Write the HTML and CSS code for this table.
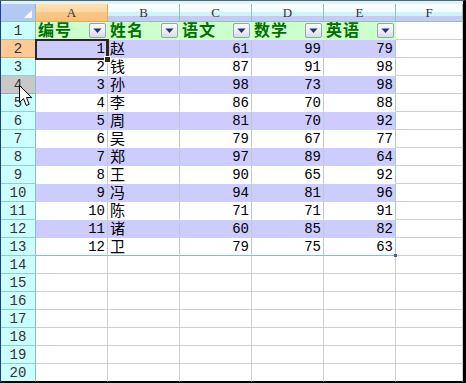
FILE: index.html
```html
<!DOCTYPE html>
<html lang="zh">
<head>
<meta charset="utf-8">
<title>Sheet</title>
<link rel="stylesheet" href="styles.css">
</head>
<body>
<div class="sheet">
  <div class="strip"></div>
  <div class="grid">
    <div class="corner"><span class="tri"></span></div>
    <div class="ch ch-sel">A</div>
    <div class="ch">B</div>
    <div class="ch">C</div>
    <div class="ch">D</div>
    <div class="ch">E</div>
    <div class="ch">F</div>

    <div class="rh">1</div>
    <div class="th"><span class="tt">编号</span><span class="dd"><svg width="9" height="6" viewBox="0 0 9 6"><path d="M0.5 0.5h8l-4 4.5z" fill="#1d2f78"/></svg></span></div>
    <div class="th"><span class="tt">姓名</span><span class="dd"><svg width="9" height="6" viewBox="0 0 9 6"><path d="M0.5 0.5h8l-4 4.5z" fill="#1d2f78"/></svg></span></div>
    <div class="th"><span class="tt">语文</span><span class="dd"><svg width="9" height="6" viewBox="0 0 9 6"><path d="M0.5 0.5h8l-4 4.5z" fill="#1d2f78"/></svg></span></div>
    <div class="th"><span class="tt">数学</span><span class="dd"><svg width="9" height="6" viewBox="0 0 9 6"><path d="M0.5 0.5h8l-4 4.5z" fill="#1d2f78"/></svg></span></div>
    <div class="th"><span class="tt">英语</span><span class="dd"><svg width="9" height="6" viewBox="0 0 9 6"><path d="M0.5 0.5h8l-4 4.5z" fill="#1d2f78"/></svg></span></div>
    <div class="c"></div>

    <div class="rh rh-sel">2</div>
    <div class="td band num">1</div><div class="td band txt">赵</div><div class="td band num">61</div><div class="td band num">99</div><div class="td band num">79</div><div class="c"></div>
    <div class="rh">3</div>
    <div class="td num">2</div><div class="td txt">钱</div><div class="td num">87</div><div class="td num">91</div><div class="td num">98</div><div class="c"></div>
    <div class="rh rh-hover">4</div>
    <div class="td band num">3</div><div class="td band txt">孙</div><div class="td band num">98</div><div class="td band num">73</div><div class="td band num">98</div><div class="c"></div>
    <div class="rh">5</div>
    <div class="td num">4</div><div class="td txt">李</div><div class="td num">86</div><div class="td num">70</div><div class="td num">88</div><div class="c"></div>
    <div class="rh">6</div>
    <div class="td band num">5</div><div class="td band txt">周</div><div class="td band num">81</div><div class="td band num">70</div><div class="td band num">92</div><div class="c"></div>
    <div class="rh">7</div>
    <div class="td num">6</div><div class="td txt">吴</div><div class="td num">79</div><div class="td num">67</div><div class="td num">77</div><div class="c"></div>
    <div class="rh">8</div>
    <div class="td band num">7</div><div class="td band txt">郑</div><div class="td band num">97</div><div class="td band num">89</div><div class="td band num">64</div><div class="c"></div>
    <div class="rh">9</div>
    <div class="td num">8</div><div class="td txt">王</div><div class="td num">90</div><div class="td num">65</div><div class="td num">92</div><div class="c"></div>
    <div class="rh">10</div>
    <div class="td band num">9</div><div class="td band txt">冯</div><div class="td band num">94</div><div class="td band num">81</div><div class="td band num">96</div><div class="c"></div>
    <div class="rh">11</div>
    <div class="td num">10</div><div class="td txt">陈</div><div class="td num">71</div><div class="td num">71</div><div class="td num">91</div><div class="c"></div>
    <div class="rh">12</div>
    <div class="td band num">11</div><div class="td band txt">诸</div><div class="td band num">60</div><div class="td band num">85</div><div class="td band num">82</div><div class="c"></div>
    <div class="rh">13</div>
    <div class="td last num">12</div><div class="td last txt">卫</div><div class="td last num">79</div><div class="td last num">75</div><div class="td last num corner-cell">63</div><div class="c"></div>

    <div class="rh">14</div><div class="c"></div><div class="c"></div><div class="c"></div><div class="c"></div><div class="c"></div><div class="c"></div>
    <div class="rh">15</div><div class="c"></div><div class="c"></div><div class="c"></div><div class="c"></div><div class="c"></div><div class="c"></div>
    <div class="rh">16</div><div class="c"></div><div class="c"></div><div class="c"></div><div class="c"></div><div class="c"></div><div class="c"></div>
    <div class="rh">17</div><div class="c"></div><div class="c"></div><div class="c"></div><div class="c"></div><div class="c"></div><div class="c"></div>
    <div class="rh">18</div><div class="c"></div><div class="c"></div><div class="c"></div><div class="c"></div><div class="c"></div><div class="c"></div>
    <div class="rh">19</div><div class="c"></div><div class="c"></div><div class="c"></div><div class="c"></div><div class="c"></div><div class="c"></div>
    <div class="rh bottom">20</div><div class="c bottom"></div><div class="c bottom"></div><div class="c bottom"></div><div class="c bottom"></div><div class="c bottom"></div><div class="c bottom"></div>
  </div>

  <div class="selbox"><span class="handle"></span></div>
  <svg class="cursor" width="14" height="23" viewBox="0 0 14 23">
    <path d="M0.5 0.5 L0.5 17.5 L4.5 13.6 L7.3 20.5 L10.2 19.3 L7.5 12.6 L12.8 12.6 Z" fill="#fff" stroke="#000" stroke-width="1" stroke-linejoin="miter"/>
  </svg>
</div>
</body>
</html>
```

FILE: styles.css
```css
* {
  box-sizing: border-box;
  margin: 0;
  padding: 0;
}

body {
  margin: 0;
  width: 466px;
  height: 383px;
  overflow: hidden;
  background: #ffffff;
}

.sheet {
  position: relative;
  width: 466px;
  height: 383px;
  border-top: 1px solid #3d7078;
  border-left: 1px solid #1d3f8c;
  border-right: 3px solid #000;
  border-bottom: 1px solid #000;
  background: #fff;
}

.strip {
  height: 3px;
  background: #e6f0f2;
}

.grid {
  display: grid;
  grid-template-columns: 35px repeat(5, 72px) 67px;
  grid-template-rows: 18px;
  grid-auto-rows: 18px;
}

.grid > div {
  border-right: 1px solid #d0d0d0;
  border-bottom: 1px solid #d0d0d0;
}

/* corner select-all */
.grid > .corner {
  position: relative;
  background: #b2c9f2;
  border-right: 1px solid #8cbfc6;
  border-bottom: 1px solid #8cbfc6;
}

.tri {
  position: absolute;
  right: 3px;
  bottom: 3px;
  width: 0;
  height: 0;
  border-left: 8px solid transparent;
  border-bottom: 8px solid #f4f8ff;
}

/* column headers */
.grid > .ch {
  background: linear-gradient(to bottom, #fbfefe 0%, #f4fbfc 44%, #cdf5f8 48%, #cdf5f8 70%, #c9c9f6 73%, #c9c9f6 100%);
  border-right: 1px solid #8cc2c6;
  border-bottom: 1px solid #8cc2c6;
  font: 13px/16px "Liberation Serif", serif;
  color: #333;
  text-align: center;
  padding-top: 1px;
}

.grid > .ch-sel {
  background: linear-gradient(to bottom, #fde3b8 0%, #fcd7a2 44%, #f9c888 48%, #f8c07a 100%);
  border-right: 1px solid #f0a848;
  border-bottom: 1px solid #f0a848;
}

/* row headers */
.grid > .rh {
  background: #ccffff;
  border-right: 1px solid #7fc3c6;
  border-bottom: 1px solid #8fcfd0;
  font: 14px/16px "Liberation Mono", monospace;
  color: #333;
  text-align: center;
  padding-top: 1px;
}

.grid > .rh-sel {
  background: #fdc994;
  border-right: 1px solid #f0a040;
  border-bottom: 1px solid #f0a040;
}

.grid > .rh-hover {
  background: #c8c8c8;
  border-bottom: 1px solid #a8a8a8;
}

/* table header row */
.grid > .th {
  display: flex;
  align-items: center;
  justify-content: space-between;
  background: #ccffcc;
  border-right: 1px solid #ccffcc;
  border-bottom: 1px solid #ccffcc;
  padding: 0 1px 0 2px;
}

.tt {
  font: bold 16px/16px "Liberation Serif", "Noto Sans CJK SC", sans-serif;
  color: #007000;
  letter-spacing: 1px;
}

.dd {
  display: flex;
  align-items: center;
  justify-content: center;
  flex: none;
  width: 17px;
  height: 15px;
  border: 1px solid #9aa3b4;
  border-radius: 2px;
  background: linear-gradient(to bottom, #fdfdfd 0%, #eceef2 55%, #d8dbe2 100%);
  padding-top: 1px;
}

/* table body */
.grid > .td {
  background: #ffffff;
  border-right: 1px solid #c4c8c8;
  border-bottom: 1px solid transparent;
  color: #000;
  white-space: nowrap;
}

.grid > .td.band {
  background: #ccccff;
}

.grid > .td.last {
  border-bottom: 1px solid #7fc4c4;
}

.grid > .td:nth-child(7n+6) {
  border-right-color: #a8cccc;
}

.num {
  font: 14px/16px "Liberation Mono", monospace;
  text-align: right;
  padding: 1px 2px 0 0;
}

.txt {
  font: 15px/16px "Liberation Sans", "Noto Sans CJK SC", sans-serif;
  padding: 1px 0 0 2px;
}

.grid > .corner-cell {
  position: relative;
}

.corner-cell::after {
  content: "";
  position: absolute;
  right: -2px;
  bottom: -2px;
  width: 3px;
  height: 3px;
  background: #3a64a8;
}

.grid > .c {
  background: #fff;
}

.grid > .bottom {
  border-bottom-color: #000;
}

/* selection box over A2 */
.selbox {
  position: absolute;
  left: 34px;
  top: 38px;
  width: 74px;
  height: 21px;
  border: 2px solid #2f261c;
  border-right-width: 3px;
}

.handle {
  position: absolute;
  right: -5px;
  bottom: -5px;
  width: 7px;
  height: 7px;
  background: #2f261c;
  border: 1px solid #fff;
}

.cursor {
  position: absolute;
  left: 18px;
  top: 84px;
}
```
